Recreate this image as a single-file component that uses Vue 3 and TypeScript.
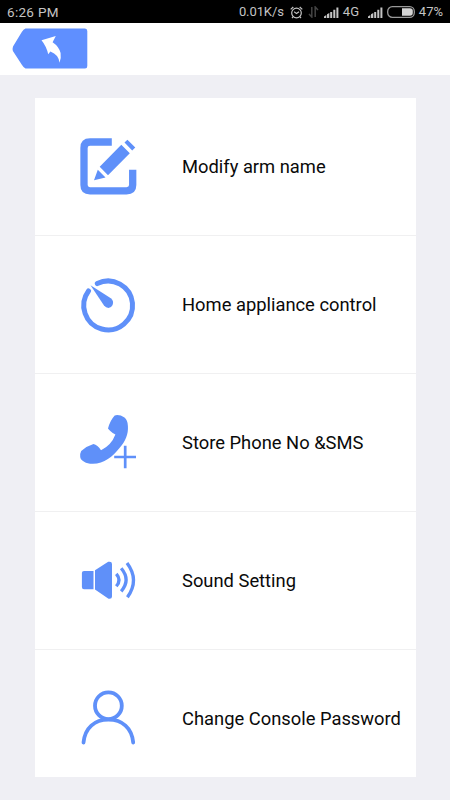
<script setup lang="ts">
interface MenuItem {
  id: 'edit' | 'timer' | 'phone' | 'sound' | 'user'
  label: string
  viewBox: string
}

const items: MenuItem[] = [
  { id: 'edit', label: 'Modify arm name', viewBox: '0 2 80 80' },
  { id: 'timer', label: 'Home appliance control', viewBox: '0 0 80 80' },
  { id: 'phone', label: 'Store Phone No &SMS', viewBox: '0 3 80 80' },
  { id: 'sound', label: 'Sound Setting', viewBox: '0 1 80 80' },
  { id: 'user', label: 'Change Console Password', viewBox: '0 -1 80 80' },
]
</script>

<template>
  <div class="screen">
    <div class="status">
      <span class="time">6:26 PM</span>
      <span class="speed">0.01K/s</span>
      <svg class="alarm" viewBox="0 0 13 13">
        <circle cx="6.5" cy="7" r="4.8" />
        <path d="M4.2 5.8 6.5 7.6 9 5.8M.7 3.4 3.3 1M12.3 3.4 9.7 1M3.2 10.6 2 12M9.8 10.6 11 12" />
      </svg>
      <svg class="data" viewBox="0 0 11 12">
        <path d="M3.8 1V11L1 8M7.2 11V1L10 4" />
      </svg>
      <svg class="signal" viewBox="0 0 15 11">
        <path d="M0 11V9.5L2.3 8V11ZM3 11V7.3L5.3 6V11ZM6.2 11V5H8.2V11ZM9.3 11V2.8H11.3V11ZM12.4 11V.5H14.4V11Z" />
      </svg>
      <span class="network">4G</span>
      <svg class="signal second" viewBox="0 0 15 11">
        <path d="M0 11V9.5L2.3 8V11ZM3 11V7.3L5.3 6V11ZM6.2 11V5H8.2V11ZM9.3 11V2.8H11.3V11ZM12.4 11V.5H14.4V11Z" />
      </svg>
      <svg class="battery" viewBox="0 0 28 12">
        <rect x=".7" y=".7" width="26.6" height="10.6" rx="4.6" />
        <path d="M15 2.2H23Q25.8 2.2 25.8 5V7Q25.8 9.8 23 9.8H15Z" />
      </svg>
      <span class="percent">47%</span>
    </div>
    <header class="header">
      <button class="back" aria-label="Back">
        <svg viewBox="0 0 76 41">
          <path class="tag" d="M13.5 .5H73Q75.3 .5 75.3 3V38Q75.3 40.5 73 40.5H13.5Q11.5 39.5 10 37L.9 23Q.3 20.5 1 18.5L9.8 4Q11.5 1.2 13.5 .5Z" />
          <path class="arrow" d="M29.5 12.2 43.8 8 40.6 14.2Q47 18.5 48.6 25Q49.4 30 47.5 34.8Q46.8 26.5 38.4 23.4L36.2 26.3Q34.6 18.5 29.5 12.2Z" />
        </svg>
      </button>
    </header>
    <main class="content">
      <ul class="card">
        <li v-for="item in items" :key="item.id" class="row">
          <svg class="icon" :viewBox="item.viewBox">
            <template v-if="item.id === 'edit'">
              <path class="line edit-frame" d="M41.8 17H20Q14 17 14 23V60Q14 65.8 20 65.8H56.5Q62.7 65.8 62.7 60V44.7" />
              <path d="M51.3 19.7 59.8 28.2 38 50.2 29.7 41.8ZM54.5 17.6 57.4 14.8 65.3 22.5 62.2 25.5ZM27.8 44.7 35.5 52.5 24 55.2Z" />
            </template>
            <template v-else-if="item.id === 'timer'">
              <path class="line dial" d="M27.3 18.6A24.4 24.4 0 1 1 18.5 26" />
              <path d="M20.5 20.3 40.8 33.3Q44.2 36 42.6 40Q41.4 42.5 38.5 42.9Q36 42.9 34 40.5Z" />
            </template>
            <template v-else-if="item.id === 'phone'">
              <path d="M44.7 15.4Q49.5 14.3 54.5 17.5Q57.7 20 57.9 26C58.5 34 55.5 41.5 49.5 48C43 56.5 34 63.5 23 63.8C16.5 64 10.8 61 10.2 57Q10 53 11.2 51Q17 46 23.5 44.1Q27.5 44.8 31 50.2Q41.3 45.4 45.4 34.5Q39.5 31 38 28.4Q40 20.5 44.7 15.4Z" />
              <path class="line plus-gap" d="M55.2 45.7V68.2M44.2 57H66" />
              <path class="line plus" d="M55.2 45.7V68.2M44.2 57H66" />
            </template>
            <template v-else-if="item.id === 'sound'">
              <path d="M14 31H23.5V49.2H14Q11.9 49.2 11.9 47V33Q11.9 31 14 31ZM25 30.3 38.2 21.8Q42 21 42 24V56.5Q42 59.3 38.5 58.7L25 49.5Z" />
              <path class="line wave" d="M46.3 33.8Q51.7 40 46.3 46.3M51.2 28.3Q61 40 51.2 51.3M57 23Q69.8 40 57.4 57.3" />
            </template>
            <template v-else>
              <circle class="line person" cx="38.4" cy="25.7" r="13.4" />
              <path class="line person" d="M13.5 62.5C15 48 24.5 39.7 38.4 39.7S61.8 48 63.2 62.5" />
            </template>
          </svg>
          <span class="label">{{ item.label }}</span>
        </li>
      </ul>
    </main>
  </div>
</template>

<style>
body {
  margin: 0;
}
</style>

<style scoped>
.screen {
  display: flex;
  flex-direction: column;
  width: 450px;
  height: 800px;
  overflow: hidden;
  background: #efeff4;
  font-family: Roboto, "Liberation Sans", sans-serif;
}

.status {
  display: flex;
  align-items: center;
  flex: none;
  box-sizing: border-box;
  height: 23px;
  padding: 1px 7px 0;
  background: #000;
  color: #c4c4c4;
  font-size: 13px;
  line-height: 22px;
  white-space: nowrap;
}

.status svg {
  flex: none;
}

.time {
  width: 232px;
  font-size: 13.5px;
  letter-spacing: 0.3px;
}

.speed {
  width: 51px;
  letter-spacing: -0.1px;
}

.alarm {
  width: 13px;
  height: 13px;
  fill: none;
  stroke: #c4c4c4;
  stroke-width: 1.2;
}

.data {
  width: 11px;
  height: 12px;
  margin-left: 5px;
  fill: none;
  stroke: #444;
  stroke-width: 1.5;
}

.signal {
  width: 15px;
  height: 11px;
  margin-left: 5px;
  fill: #c4c4c4;
}

.network {
  width: 18px;
  margin-left: 4px;
}

.signal.second {
  margin-left: 7px;
}

.battery {
  width: 28px;
  height: 12px;
  margin-left: 4px;
}

.battery rect {
  fill: none;
  stroke: #999;
  stroke-width: 1.3;
}

.battery path {
  fill: #d4d4d4;
}

.percent {
  margin-left: 4px;
}

.header {
  flex: none;
  box-sizing: border-box;
  height: 52px;
  padding: 5px 12px;
  background: #fff;
}

.back {
  display: block;
  width: 76px;
  height: 41px;
  padding: 0;
  border: 0;
  background: none;
}

.back svg {
  display: block;
  width: 76px;
  height: 41px;
}

.tag {
  fill: #5f8fff;
}

.arrow {
  fill: #fff;
}

.content {
  padding: 23px 34.5px 0 35px;
}

.card {
  height: 679px;
  margin: 0;
  padding: 0;
  overflow: hidden;
  background: #fff;
  list-style: none;
}

.row {
  display: flex;
  align-items: center;
  box-sizing: border-box;
  height: 138px;
  padding: 1px 0 0 35px;
  border-bottom: 1px solid #f0f0f1;
}

.icon {
  flex: none;
  width: 80px;
  height: 80px;
  fill: #5f90f9;
}

.line {
  fill: none;
  stroke: #5f90f9;
}

.edit-frame {
  stroke-width: 7.3;
}

.dial {
  stroke-width: 5;
  stroke-linecap: round;
}

.plus {
  stroke-width: 2.7;
}

.plus-gap {
  stroke: #fff;
  stroke-width: 4.5;
}

.wave {
  stroke-width: 3.3;
}

.person {
  stroke-width: 3.8;
  stroke-linecap: round;
}

.label {
  margin-left: 32px;
  color: #0a0a0a;
  font-size: 18.35px;
  line-height: 24px;
  white-space: nowrap;
}
</style>
